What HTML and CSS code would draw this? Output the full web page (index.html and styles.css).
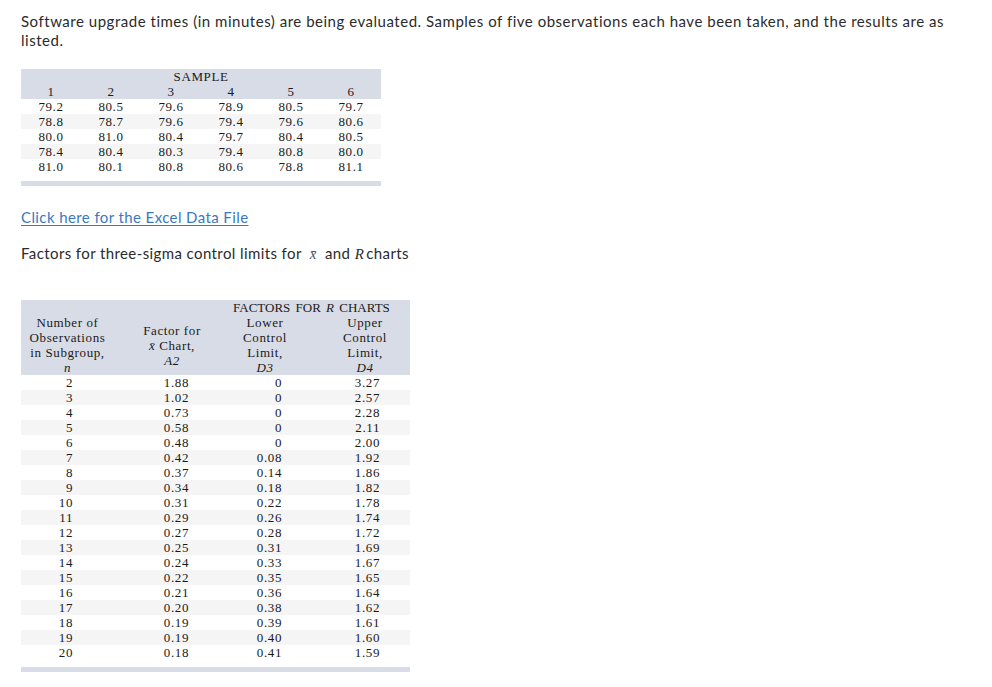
FILE: index.html
```html
<!DOCTYPE html>
<html>
<head>
<meta charset="utf-8">
<link rel="stylesheet" href="styles.css">
</head>
<body>
<div class="page">
  <p class="intro">Software upgrade times (in minutes) are being evaluated. Samples of five observations each have been taken, and the results are as listed.</p>

  <table class="tbl sample">
    <colgroup><col class="c60"><col class="c60"><col class="c60"><col class="c60"><col class="c60"><col class="c60"></colgroup>
    <thead>
      <tr><th colspan="6">SAMPLE</th></tr>
      <tr><th>1</th><th>2</th><th>3</th><th>4</th><th>5</th><th>6</th></tr>
    </thead>
    <tbody>
      <tr><td>79.2</td><td>80.5</td><td>79.6</td><td>78.9</td><td>80.5</td><td>79.7</td></tr>
      <tr class="alt"><td>78.8</td><td>78.7</td><td>79.6</td><td>79.4</td><td>79.6</td><td>80.6</td></tr>
      <tr><td>80.0</td><td>81.0</td><td>80.4</td><td>79.7</td><td>80.4</td><td>80.5</td></tr>
      <tr class="alt"><td>78.4</td><td>80.4</td><td>80.3</td><td>79.4</td><td>80.8</td><td>80.0</td></tr>
      <tr><td>81.0</td><td>80.1</td><td>80.8</td><td>80.6</td><td>78.8</td><td>81.1</td></tr>
      <tr class="gap"><td colspan="6"></td></tr>
    </tbody>
  </table>
  <div class="bar bar1"></div>

  <p class="link-line"><a href="#">Click here for the Excel Data File</a></p>

  <p class="factors">Factors for three-sigma control limits for <span class="mx">x&#772;</span> and <i class="ri">R</i>charts</p>

  <table class="tbl factors-tbl">
    <colgroup><col class="f1"><col class="f2"><col class="f3"><col class="f4"></colgroup>
    <thead>
      <tr><th></th><th></th><th colspan="2" class="grp">FACTORS FOR <i>R</i> CHARTS</th></tr>
      <tr>
        <th class="h1">Number of<br>Observations<br>in Subgroup,<br><i>n</i></th>
        <th class="h2">Factor for<br><span class="hx">x&#772;</span> Chart,<br><i>A2</i></th>
        <th class="h3">Lower<br>Control<br>Limit,<br><i>D3</i></th>
        <th class="h4">Upper<br>Control<br>Limit,<br><i>D4</i></th>
      </tr>
    </thead>
    <tbody>
      <tr><td>2</td><td>1.88</td><td>0</td><td>3.27</td></tr>
      <tr class="alt"><td>3</td><td>1.02</td><td>0</td><td>2.57</td></tr>
      <tr><td>4</td><td>0.73</td><td>0</td><td>2.28</td></tr>
      <tr class="alt"><td>5</td><td>0.58</td><td>0</td><td>2.11</td></tr>
      <tr><td>6</td><td>0.48</td><td>0</td><td>2.00</td></tr>
      <tr class="alt"><td>7</td><td>0.42</td><td>0.08</td><td>1.92</td></tr>
      <tr><td>8</td><td>0.37</td><td>0.14</td><td>1.86</td></tr>
      <tr class="alt"><td>9</td><td>0.34</td><td>0.18</td><td>1.82</td></tr>
      <tr><td>10</td><td>0.31</td><td>0.22</td><td>1.78</td></tr>
      <tr class="alt"><td>11</td><td>0.29</td><td>0.26</td><td>1.74</td></tr>
      <tr><td>12</td><td>0.27</td><td>0.28</td><td>1.72</td></tr>
      <tr class="alt"><td>13</td><td>0.25</td><td>0.31</td><td>1.69</td></tr>
      <tr><td>14</td><td>0.24</td><td>0.33</td><td>1.67</td></tr>
      <tr class="alt"><td>15</td><td>0.22</td><td>0.35</td><td>1.65</td></tr>
      <tr><td>16</td><td>0.21</td><td>0.36</td><td>1.64</td></tr>
      <tr class="alt"><td>17</td><td>0.20</td><td>0.38</td><td>1.62</td></tr>
      <tr><td>18</td><td>0.19</td><td>0.39</td><td>1.61</td></tr>
      <tr class="alt"><td>19</td><td>0.19</td><td>0.40</td><td>1.60</td></tr>
      <tr><td>20</td><td>0.18</td><td>0.41</td><td>1.59</td></tr>
      <tr class="gap"><td colspan="4"></td></tr>
    </tbody>
  </table>
  <div class="bar bar2"></div>
</div>
</body>
</html>
```

FILE: styles.css
```css
html, body {
  margin: 0;
  padding: 0;
  background: #ffffff;
}

.page {
  padding: 12px 21px 20px 21px;
  font-family: "Lato", "Liberation Sans", sans-serif;
  font-size: 15px;
  letter-spacing: 0.4px;
  color: #2b2b2b;
}

.intro {
  margin: 0;
  line-height: 19px;
  width: 940px;
  letter-spacing: 0.52px;
}

.tbl {
  border-collapse: collapse;
  table-layout: fixed;
  font-family: "Liberation Serif", "DejaVu Serif", serif;
  font-size: 13px;
  letter-spacing: 0.6px;
  color: #1a1a1a;
}

.tbl th,
.tbl td {
  padding: 0;
  height: 15px;
  line-height: 15px;
  font-weight: normal;
  white-space: nowrap;
}

.tbl thead {
  background: #d8dce6;
}

.tbl tr.alt {
  background: #f5f5f5;
}

.tbl tr.gap td {
  height: 7px;
  line-height: 7px;
}

.bar {
  height: 5px;
  background: #d8dce6;
}

/* sample table */
.sample {
  margin-top: 19px;
  width: 360px;
}

.sample .c60 {
  width: 60px;
}

.sample th,
.sample td {
  text-align: center;
}

.bar1 {
  width: 360px;
}

.link-line {
  margin: 21px 0 0 0;
  line-height: 20px;
}

.link-line a {
  color: #3a79c0;
  text-decoration: underline;
  text-underline-offset: 2px;
  text-decoration-thickness: 1px;
}

.factors {
  margin: 16px 0 0 0;
  line-height: 20px;
}

.mx {
  font-family: "Liberation Serif", serif;
  font-style: italic;
  color: #555;
  margin: 0 4px;
}

.ri {
  font-family: "Liberation Serif", serif;
  font-style: italic;
  margin-right: 2px;
}

/* factors table */
.factors-tbl {
  margin-top: 36px;
  width: 389px;
}

.factors-tbl .f1 { width: 95px; }
.factors-tbl .f2 { width: 110px; }
.factors-tbl .f3 { width: 86px; }
.factors-tbl .f4 { width: 98px; }

.factors-tbl th {
  text-align: center;
  vertical-align: middle;
}

.factors-tbl .grp {
  text-align: left;
  padding-left: 7px;
  letter-spacing: 0;
  word-spacing: 2px;
}

.factors-tbl .h1 { padding-right: 2px; }
.factors-tbl .h2 { padding-left: 2px; }
.factors-tbl .h3 { padding-right: 8px; }
.factors-tbl .h4 { padding-left: 8px; }

.factors-tbl th i {
  font-style: italic;
}

.hx {
  font-family: "Liberation Serif", serif;
  font-style: italic;
}

.factors-tbl td {
  text-align: right;
}

.factors-tbl td:nth-child(1) { padding-right: 43px; }
.factors-tbl td:nth-child(2) { padding-right: 37px; }
.factors-tbl td:nth-child(3) { padding-right: 30px; }
.factors-tbl td:nth-child(4) { padding-right: 30px; }

.bar2 {
  width: 389px;
}
```
